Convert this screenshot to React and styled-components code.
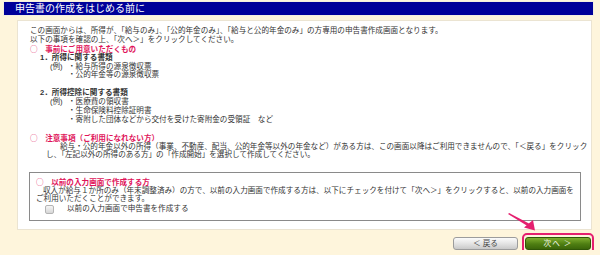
import React from "react";
import styled, { createGlobalStyle } from "styled-components";

const GlobalStyle = createGlobalStyle`
  html, body { margin: 0; padding: 0; }
  body {
    background: #fef5dc;
    font-family: "Liberation Sans", "Noto Sans CJK JP", sans-serif;
    color: #333;
  }
`;

const Page = styled.div`
  padding: 2px 0 0 4px;
  width: 596px;
  box-sizing: border-box;
`;

const TitleBar = styled.div`
  width: 589px;
  height: 13px;
  background: #000099;
  box-shadow: 0 0 0 1px #f4efe0;
  color: #fff;
  font-size: 10px;
  line-height: 13px;
  padding-left: 11px;
  box-sizing: border-box;
  white-space: nowrap;
`;

const Panel = styled.div`
  margin: 5px 0 0 13px;
  width: 575px;
  box-sizing: border-box;
  background: #fff;
  border: 1px solid #ebe4d2;
  padding: 6px 10px 8px 12px;
`;

const Line = styled.div`
  font-size: 7.6px;
  line-height: ${(p) => p.$lh || 8.9}px;
  height: ${(p) => p.$lh || 8.9}px;
  white-space: nowrap;
  padding-left: ${(p) => p.$indent || 0}px;
  text-indent: ${(p) => p.$first || 0}px;
  margin-top: ${(p) => p.$gap || 0}px;
`;

const Heading = styled(Line)`
  color: #e0145a;
  font-weight: bold;
`;

const Circle = styled.span`
  font-family: "Noto Sans CJK JP", sans-serif;
  font-weight: normal;
`;

const SubHeading = styled(Line)`
  font-weight: bold;
`;

const ExampleRow = styled.div`
  display: flex;
  padding-left: ${(p) => p.$indent || 0}px;
  font-size: 7.6px;
  line-height: 8.9px;
  white-space: nowrap;
`;

const ExampleLabel = styled.span`
  width: 18px;
  flex: none;
`;

const ExampleItems = styled.div`
  display: flex;
  flex-direction: column;
  & > span {
    height: 8.9px;
  }
`;

const NoticeBox = styled.div`
  margin: 11.5px 0 0 -1px;
  width: 552px;
  box-sizing: border-box;
  border: 1px solid #8a8a8a;
  padding: 5.5px 6px 5.5px 6px;
`;

const CheckRow = styled.label`
  display: flex;
  align-items: center;
  height: 10px;
  margin-top: 0.5px;
  padding-left: 9px;
  font-size: 7.6px;
  line-height: 10px;
  white-space: nowrap;
`;

const CheckBox = styled.span`
  width: 9px;
  height: 9px;
  flex: none;
  box-sizing: border-box;
  border: 1px solid #b4b4b4;
  border-radius: 2px;
  background: linear-gradient(#f6f6f6, #d6d6d6);
  margin-right: 13px;
`;

const Footer = styled.div`
  position: relative;
  margin: 7px 0 0 13px;
  width: 574px;
  display: flex;
  justify-content: flex-end;
  gap: 7px;
`;

const Button = styled.div`
  height: 13px;
  box-sizing: border-box;
  border-radius: 3px;
  font-size: 7.6px;
  line-height: 11px;
  text-align: center;
  white-space: nowrap;
  width: ${(p) => p.$w}px;
  border: 1px solid ${(p) => (p.$primary ? "#2f5608" : "#9c9c9c")};
  background: ${(p) =>
    p.$primary
      ? "linear-gradient(#7fae2e, #4e7e12 55%, #3b660a)"
      : "linear-gradient(#fbfbfb, #e2e2e2 55%, #c9c9c9)"};
  color: ${(p) => (p.$primary ? "#f4f8ea" : "#444")};
  letter-spacing: ${(p) => (p.$primary ? "1px" : "0")};
`;

const Highlight = styled.div`
  position: relative;
  &::after {
    content: "";
    position: absolute;
    inset: -4px -3px -4px -3px;
    border: 2px solid #e51f6f;
    border-radius: 5px;
  }
`;

const Arrow = styled.svg`
  position: absolute;
  left: 491px;
  top: -23px;
  overflow: visible;
`;

export default function App() {
  return (
    <>
      <GlobalStyle />
      <Page>
        <TitleBar>申告書の作成をはじめる前に</TitleBar>
        <Panel>
          <Line>
            この画面からは、所得が、「給与のみ」、「公的年金のみ」、「給与と公的年金のみ」の方専用の申告書作成画面となります。
          </Line>
          <Line>以下の事項を確認の上、「次へ＞」をクリックしてください。</Line>
          <Heading>
            <Circle>○</Circle>　事前にご用意いただくもの
          </Heading>
          <SubHeading $indent={10}>1．所得に関する書類</SubHeading>
          <ExampleRow $indent={20}>
            <ExampleLabel>(例)</ExampleLabel>
            <ExampleItems>
              <span>・給与所得の源泉徴収票</span>
              <span>・公的年金等の源泉徴収票</span>
            </ExampleItems>
          </ExampleRow>
          <SubHeading $indent={10} $gap={8.9}>
            2．所得控除に関する書類
          </SubHeading>
          <ExampleRow $indent={20}>
            <ExampleLabel>(例)</ExampleLabel>
            <ExampleItems>
              <span>・医療費の領収書</span>
              <span>・生命保険料控除証明書</span>
              <span>・寄附した団体などから交付を受けた寄附金の受領証　など</span>
            </ExampleItems>
          </ExampleRow>
          <Heading $gap={8.9}>
            <Circle>○</Circle>　注意事項（ご利用になれない方）
          </Heading>
          <Line $indent={16} $first={14}>
            給与・公的年金以外の所得（事業、不動産、配当、公的年金等以外の年金など）がある方は、この画面以降はご利用できませんので、「＜戻る」をクリック
          </Line>
          <Line $indent={16}>
            し、「左記以外の所得のある方」の「作成開始」を選択して作成してください。
          </Line>
          <NoticeBox>
            <Heading $lh={8.5}>
              <Circle>○</Circle>　以前の入力画面で作成する方
            </Heading>
            <Line $lh={8.5} $first={7}>
              収入が給与１か所のみ（年末調整済み）の方で、以前の入力画面で作成する方は、以下にチェックを付けて「次へ＞」をクリックすると、以前の入力画面を
            </Line>
            <Line $lh={8.5}>ご利用いただくことができます。</Line>
            <CheckRow>
              <CheckBox />
              以前の入力画面で申告書を作成する
            </CheckRow>
          </NoticeBox>
        </Panel>
        <Footer>
          <Button $w={65}>＜ 戻る</Button>
          <Highlight>
            <Button $w={66} $primary>
              次へ ＞
            </Button>
          </Highlight>
          <Arrow width="40" height="24" viewBox="0 0 40 24">
            <polygon points="0,0 1.2,-1 21,9.5 19.5,12" fill="#e51f6f" />
            <polygon points="16,13.5 25,6 27,16.5" fill="#e51f6f" />
          </Arrow>
        </Footer>
      </Page>
    </>
  );
}
